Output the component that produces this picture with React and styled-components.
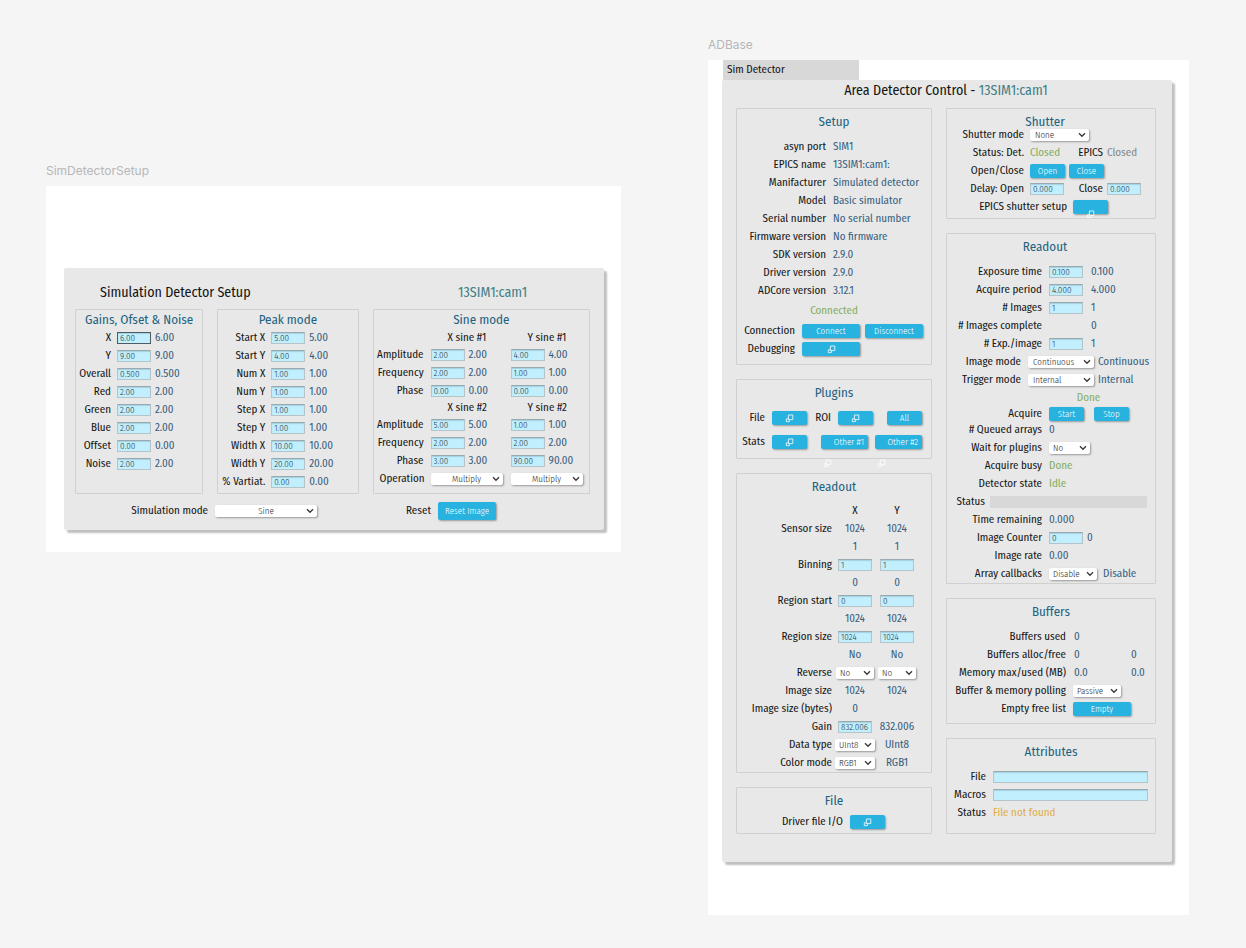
import React, { useId } from 'react';
import styled, { createGlobalStyle } from 'styled-components';

const Global = createGlobalStyle`
  * { box-sizing: border-box; }
  body {
    margin: 0;
    min-height: 100vh;
    background: #f5f5f5;
    color: #141414;
    font: 11px/18px "Fira Sans Condensed", "Roboto Condensed", "Noto Sans", sans-serif;
  }
`;

const c = {
  value: '#37607f',
  heading: '#1e6482',
  device: '#3f7f86',
  ok: '#83ad5e',
  warn: '#e0ae45',
  muted: '#80868a',
  button: '#27b2df',
  field: '#c1effe',
};

/* ---------- canvas ---------- */
const Canvas = styled.main`
  display: grid;
  grid-template-columns: minmax(560px, 575fr) minmax(470px, 481fr);
  column-gap: 87px;
  align-items: start;
  padding: 36px 57px 33px 46px;
`;
const Frame = styled.section`
  padding-top: ${(p) => p.$top || 0}px;
`;
const FrameName = styled.div`
  height: 24px;
  font-family: Inter, Roboto, sans-serif;
  font-size: 12px;
  color: #b7b7b7;
`;
const Sheet = styled.div`
  background: #fff;
  padding: ${(p) => p.$pad};
`;
const Panel = styled.div`
  background: #e8e8e8;
  border-radius: 2px;
  box-shadow: 3px 3px 2px rgba(0, 0, 0, 0.25);
  padding: ${(p) => p.$pad};
`;
const Tab = styled.div`
  width: 136px;
  height: 20px;
  margin-left: 1px;
  padding: 1px 0 0 4px;
  background: #d8d8d8;
`;
const TitleRow = styled.header`
  display: grid;
  grid-template-columns: 358px 1fr;
  padding-left: 25px;
  margin-bottom: 6px;
`;
const Title = styled.h1`
  margin: 0 0 ${(p) => p.$after || 0}px;
  font-size: 14px;
  line-height: 20px;
  font-weight: 400;
  text-align: ${(p) => (p.$center ? 'center' : 'left')};
`;
const Device = styled.span`
  color: ${c.device};
  font-size: 14px;
  line-height: 20px;
`;

/* ---------- groups ---------- */
const Columns = styled.div`
  display: grid;
  grid-template-columns: ${(p) => p.$cols};
  column-gap: 14px;
`;
const Stack = styled.div`
  display: flex;
  flex-direction: column;
  gap: 14px;
`;
const Group = styled.section`
  border: 1px solid #d0d0d0;
  border-radius: 1px;
  padding: ${(p) => (p.$compact ? 2 : 5)}px 0 ${(p) => p.$bottom || 0}px;
`;
const Heading = styled.h2`
  margin: 0 0 ${(p) => p.$after ?? 8}px;
  padding-right: ${(p) => (p.$shift ? 12 : 0)}px;
  font-size: 13px;
  line-height: 16px;
  font-weight: 400;
  color: ${c.heading};
  text-align: center;
`;
const Rows = styled.div`
  display: flex;
  flex-direction: column;
  gap: ${(p) => p.$gap || 0}px;
`;
const Line = styled.div`
  display: flex;
  align-items: center;
  height: ${(p) => p.$h || 18}px;
  padding-left: ${(p) => p.$indent || 0}px;
  padding-right: ${(p) => p.$end || 0}px;
`;
const Cell = styled.span`
  display: flex;
  flex: 0 0 ${(p) => (p.$w ? p.$w + 'px' : 'auto')};
  align-items: center;
  justify-content: ${(p) => (p.$center ? 'center' : 'flex-start')};
  gap: ${(p) => p.$gap || 0}px;
`;
const Label = styled.label`
  flex: 0 0 ${(p) => (p.$w ? p.$w + 'px' : 'auto')};
  margin-right: ${(p) => p.$gap ?? 7}px;
  text-align: right;
  white-space: nowrap;
  display: flex;
  justify-content: flex-end;
`;
const Value = styled.output`
  color: ${(p) => c[p.$tone || 'value']};
  white-space: nowrap;
`;
const Centered = styled.div`
  height: ${(p) => p.$h || 18}px;
  line-height: ${(p) => p.$h || 18}px;
  padding-left: ${(p) => p.$indent || 0}px;
  text-align: center;
`;

/* ---------- controls ---------- */
const Field = styled.input`
  flex: ${(p) => (p.$grow ? '1 1 0' : '0 0 34px')};
  width: 34px;
  min-width: 0;
  height: 12px;
  padding: 0 0 0 2px;
  border: 1px solid ${(p) => (p.$active ? '#4d5c62' : '#b4c4c9')};
  border-top-color: ${(p) => (p.$active ? '#4d5c62' : '#99a9ae')};
  border-radius: 0;
  outline: 0;
  background: ${c.field};
  box-shadow: inset 0 1px 1px rgba(0, 40, 60, 0.15);
  color: #26343a;
  font: 300 9px/10px "Fira Sans Condensed", "Roboto Condensed", sans-serif;
`;
const SelectBox = styled.span`
  position: relative;
  flex: none;
  width: ${(p) => p.$w}px;
  height: 12px;
  border-radius: 2px;
  background: #fff;
  box-shadow: 1px 1px 2px rgba(0, 0, 0, 0.35);

  select {
    display: block;
    appearance: none;
    width: 100%;
    height: 12px;
    padding: 0 ${(p) => (p.$center ? 0 : 10)}px 0 ${(p) => (p.$center ? 0 : p.$w > 55 ? 5 : 4)}px;
    border: 0;
    outline: 0;
    background: transparent;
    color: #262626;
    font: 300 9px/12px "Fira Sans Condensed", "Roboto Condensed", sans-serif;
    text-align-last: ${(p) => (p.$center ? 'center' : 'left')};
  }
  svg {
    position: absolute;
    top: 3px;
    right: 3px;
    pointer-events: none;
  }
`;
const Push = styled.button`
  position: relative;
  flex: none;
  display: flex;
  align-items: center;
  justify-content: ${(p) => (p.$right ? 'flex-end' : 'center')};
  width: ${(p) => p.$w || 35}px;
  height: ${(p) => p.$h || 14}px;
  margin-left: ${(p) => p.$ml || 0}px;
  padding: 0 ${(p) => (p.$right ? 4 : 0)}px 0 0;
  border: 0;
  border-radius: 2px;
  background: ${c.button};
  box-shadow: 1px 1px 2px rgba(0, 0, 0, 0.35);
  color: #fff;
  font: 300 9px/14px "Fira Sans Condensed", "Roboto Condensed", sans-serif;
  white-space: nowrap;
`;
const Dropped = styled.span`
  position: absolute;
  top: ${(p) => p.$top}px;
  left: ${(p) => p.$left}px;
  display: flex;
`;
const Progress = styled.div`
  flex: 1;
  height: 12px;
  background: #d8d8d8;
`;

function Windows() {
  return (
    <svg width="9" height="9" viewBox="0 0 9 9" fill="none" stroke="#fff" strokeWidth="0.8" aria-hidden="true">
      <path d="M3.4 1h4.4v4.6H3.4z" />
      <path d="M3.4 4.8H1.3v2.8h3.1v-2" />
    </svg>
  );
}

function Select({ value, w, center, ...rest }) {
  return (
    <SelectBox $w={w} $center={center}>
      <select defaultValue={value} {...rest}>
        <option>{value}</option>
      </select>
      <svg width="8" height="6" viewBox="0 0 8 6" fill="none" stroke="#3a3a3a" strokeWidth="1.4" aria-hidden="true">
        <path d="M1 1.2l3 3 3-3" />
      </svg>
    </SelectBox>
  );
}

/* label, editable set point and read-back value */
function Param({ label, w, gap, value, readback, between = 4, active }) {
  const id = useId();
  return (
    <Line>
      <Label $w={w} $gap={gap} htmlFor={id}>{label}</Label>
      <Cell $gap={between}>
        <Field id={id} defaultValue={value} $active={active} />
        <Value>{readback ?? value}</Value>
      </Cell>
    </Line>
  );
}

function Info({ label, w, gap, value, tone, pad = 0 }) {
  return (
    <Line>
      <Label as="span" $w={w} $gap={gap}>{label}</Label>
      {pad > 0 && <Cell $w={pad} />}
      <Value $tone={tone}>{value}</Value>
    </Line>
  );
}

function Choice({ label, w, gap, value, width, readback, between = 4 }) {
  const id = useId();
  return (
    <Line>
      <Label $w={w} $gap={gap} htmlFor={id}>{label}</Label>
      <Cell $gap={between}>
        <Select id={id} value={value} w={width} />
        {readback && <Value>{readback}</Value>}
      </Cell>
    </Line>
  );
}

/* ---------- simulation detector setup ---------- */
const gains = [
  ['X', '6.00'], ['Y', '9.00'], ['Overall', '0.500'], ['Red', '2.00'],
  ['Green', '2.00'], ['Blue', '2.00'], ['Offset', '0.00'], ['Noise', '2.00'],
];
const peaks = [
  ['Start X', '5.00'], ['Start Y', '4.00'], ['Num X', '1.00'], ['Num Y', '1.00'], ['Step X', '1.00'],
  ['Step Y', '1.00'], ['Width X', '10.00'], ['Width Y', '20.00'], ['% Vartiat.', '0.00'],
];
const sines = [
  { n: 1, rows: [['Amplitude', '2.00', '4.00'], ['Frequency', '2.00', '1.00'], ['Phase', '0.00', '0.00']] },
  { n: 2, rows: [['Amplitude', '5.00', '1.00'], ['Frequency', '2.00', '2.00'], ['Phase', '3.00', '90.00']] },
];

function SineRow({ label, x, y }) {
  const id = useId();
  return (
    <Line>
      <Label $w={50} htmlFor={id}>{label}</Label>
      <Cell $w={80} $gap={4}>
        <Field id={id} defaultValue={x} />
        <Value>{x}</Value>
      </Cell>
      <Cell $gap={4}>
        <Field aria-label={`${label} Y`} defaultValue={y} />
        <Value>{y}</Value>
      </Cell>
    </Line>
  );
}

const Footer = styled.div`
  display: grid;
  grid-template-columns: 297px 1fr;
  padding-top: 8px;
`;

function SimDetectorSetup() {
  return (
    <Frame $top={126}>
      <FrameName>SimDetectorSetup</FrameName>
      <Sheet $pad="82px 17px 22px 18px">
        <Panel $pad="15px 14px 10px 11px">
          <TitleRow>
            <Title>Simulation Detector Setup</Title>
            <Device>13SIM1:cam1</Device>
          </TitleRow>
          <Columns $cols="128fr 141fr 217fr">
            <Group $compact>
              <Heading $after={1}>Gains, Ofset &amp; Noise</Heading>
              <Rows>
                {gains.map(([l, v], i) => (
                  <Param key={l} label={l} value={v} w={35} gap={6} active={i === 0} />
                ))}
              </Rows>
            </Group>
            <Group $compact $bottom={2}>
              <Heading $after={1}>Peak mode</Heading>
              <Rows>
                {peaks.map(([l, v]) => (
                  <Param key={l} label={l} value={v} w={47} gap={6} />
                ))}
              </Rows>
            </Group>
            <Group $compact>
              <Heading $after={2}>Sine mode</Heading>
              <Rows>
                {sines.map((s) => (
                  <React.Fragment key={s.n}>
                    <Line $h={16} $indent={74}>
                      <Cell $w={80}>X sine #{s.n}</Cell>
                      <Cell>Y sine #{s.n}</Cell>
                    </Line>
                    {s.rows.map(([l, x, y]) => (
                      <SineRow key={l} label={l} x={x} y={y} />
                    ))}
                  </React.Fragment>
                ))}
                <Line>
                  <Label $w={51} $gap={6} htmlFor="op-x">Operation</Label>
                  <Cell $w={80}><Select id="op-x" value="Multiply" w={72} center /></Cell>
                  <Cell><Select aria-label="Operation Y" value="Multiply" w={72} center /></Cell>
                </Line>
              </Rows>
            </Group>
          </Columns>
          <Footer>
            <Line>
              <Label $w={133} htmlFor="sim-mode">Simulation mode</Label>
              <Select id="sim-mode" value="Sine" w={102} center />
            </Line>
            <Line>
              <Label $w={59} htmlFor="reset">Reset</Label>
              <Push id="reset" $w={58} $h={18}>Reset Image</Push>
            </Line>
          </Footer>
        </Panel>
      </Sheet>
    </Frame>
  );
}

/* ---------- area detector base ---------- */
const setup = [
  ['asyn port', 'SIM1'], ['EPICS name', '13SIM1:cam1:'], ['Manifacturer', 'Simulated detector'],
  ['Model', 'Basic simulator'], ['Serial number', 'No serial number'], ['Firmware version', 'No firmware'],
  ['SDK version', '2.9.0'], ['Driver version', '2.9.0'], ['ADCore version', '3.12.1'],
];

/* readout grid row: a label and two centred cells */
function Pair({ label, x, y, plain }) {
  const cell = (v) => (typeof v === 'string' ? (plain ? v : <Value>{v}</Value>) : v);
  return (
    <Line>
      <Label as="span" $w={95} $gap={2}>{label}</Label>
      <Cell $w={42} $center>{cell(x)}</Cell>
      <Cell $w={42} $center>{cell(y)}</Cell>
    </Line>
  );
}
const field = (name, v) => <Field aria-label={name} defaultValue={v} />;

function SetupGroup() {
  return (
    <Group $bottom={6}>
      <Heading>Setup</Heading>
      <Rows>
        {setup.map(([l, v]) => <Info key={l} label={l} value={v} w={89} />)}
      </Rows>
      <Rows>
        <Centered $h={22}><Value $tone="ok">Connected</Value></Centered>
        <Line>
          <Label $w={58} htmlFor="connect">Connection</Label>
          <Cell $gap={5}>
            <Push id="connect" $w={58}>Connect</Push>
            <Push $w={58}>Disconnect</Push>
          </Cell>
        </Line>
        <Line>
          <Label $w={58} htmlFor="debug">Debugging</Label>
          <Push id="debug" $w={58}><Windows /></Push>
        </Line>
      </Rows>
    </Group>
  );
}

function PluginsGroup() {
  return (
    <Group $bottom={7}>
      <Heading>Plugins</Heading>
      <Rows $gap={6}>
        <Line>
          <Label $w={28} htmlFor="p-file">File</Label>
          <Push id="p-file"><Windows /></Push>
          <Label $w={24} htmlFor="p-roi">ROI</Label>
          <Push id="p-roi"><Windows /></Push>
          <Push $ml={14}>All</Push>
        </Line>
        <Line>
          <Label $w={28} htmlFor="p-stats">Stats</Label>
          <Push id="p-stats"><Windows /></Push>
          <Push $w={47} $ml={14} $right>
            Other #1
            <Dropped $top={24} $left={2}><Windows /></Dropped>
          </Push>
          <Push $w={47} $ml={7} $right>
            Other #2
            <Dropped $top={24} $left={2}><Windows /></Dropped>
          </Push>
        </Line>
      </Rows>
    </Group>
  );
}

function SensorGroup() {
  return (
    <Group>
      <Heading $after={7}>Readout</Heading>
      <Rows>
        <Pair x="X" y="Y" plain />
        <Pair label="Sensor size" x="1024" y="1024" />
        <Pair x="1" y="1" />
        <Pair label="Binning" x={field('Binning X', '1')} y={field('Binning Y', '1')} />
        <Pair x="0" y="0" />
        <Pair label="Region start" x={field('Region start X', '0')} y={field('Region start Y', '0')} />
        <Pair x="1024" y="1024" />
        <Pair label="Region size" x={field('Region size X', '1024')} y={field('Region size Y', '1024')} />
        <Pair x="No" y="No" />
        <Pair
          label="Reverse"
          x={<Select aria-label="Reverse X" value="No" w={38} />}
          y={<Select aria-label="Reverse Y" value="No" w={38} />}
        />
        <Pair label="Image size" x="1024" y="1024" />
        <Pair label="Image size (bytes)" x="0" y="" />
        <Pair label="Gain" x={field('Gain', '832.006')} y="832.006" />
        <Pair label="Data type" x={<Select aria-label="Data type" value="UInt8" w={40} />} y="UInt8" />
        <Pair label="Color mode" x={<Select aria-label="Color mode" value="RGB1" w={40} />} y="RGB1" />
      </Rows>
    </Group>
  );
}

function ShutterGroup() {
  return (
    <Group $bottom={2}>
      <Heading $after={-4} $shift>Shutter</Heading>
      <Rows>
        <Choice label="Shutter mode" w={77} gap={6} value="None" width={59} />
        <Line>
          <Label as="span" $w={77} $gap={6}>Status: Det.</Label>
          <Cell $w={45}><Value $tone="ok">Closed</Value></Cell>
          <Label as="span" $w={28} $gap={4}>EPICS</Label>
          <Value $tone="muted">Closed</Value>
        </Line>
        <Line>
          <Label $w={77} $gap={6} htmlFor="open">Open/Close</Label>
          <Cell $gap={4}>
            <Push id="open">Open</Push>
            <Push>Close</Push>
          </Cell>
        </Line>
        <Line>
          <Label $w={77} $gap={6} htmlFor="d-open">Delay: Open</Label>
          <Cell $w={45}><Field id="d-open" defaultValue="0.000" /></Cell>
          <Label $w={28} $gap={4} htmlFor="d-close">Close</Label>
          <Field id="d-close" defaultValue="0.000" />
        </Line>
        <Line>
          <Label $w={120} $gap={6} htmlFor="epics-setup">EPICS shutter setup</Label>
          <Push id="epics-setup">
            <Dropped $top={10} $left={13}><Windows /></Dropped>
          </Push>
        </Line>
      </Rows>
    </Group>
  );
}

function AcquireGroup() {
  return (
    <Group>
      <Heading $shift>Readout</Heading>
      <Rows>
        <Param label="Exposure time" w={95} value="0.100" between={8} />
        <Param label="Acquire period" w={95} value="4.000" between={8} />
        <Param label="# Images" w={95} value="1" between={8} />
        <Info label="# Images complete" w={95} pad={42} value="0" />
        <Param label="# Exp./image" w={95} value="1" between={8} />
        <Choice label="Image mode" w={74} value="Continuous" width={66} readback="Continuous" />
        <Choice label="Trigger mode" w={74} value="Internal" width={66} readback="Internal" />
      </Rows>
      <Centered $indent={75}><Value $tone="ok">Done</Value></Centered>
      <Rows>
        <Line $h={14}>
          <Label $w={95} htmlFor="start">Acquire</Label>
          <Cell $gap={10}>
            <Push id="start">Start</Push>
            <Push>Stop</Push>
          </Cell>
        </Line>
        <Info label="# Queued arrays" w={95} value="0" />
        <Choice label="Wait for plugins" w={95} value="No" width={41} />
        <Info label="Acquire busy" w={95} value="Done" tone="ok" />
        <Info label="Detector state" w={95} value="Idle" tone="ok" />
        <Line $end={8}>
          <Label as="span" $w={38} $gap={5}>Status</Label>
          <Progress role="progressbar" aria-label="Status" aria-valuenow={0} />
        </Line>
        <Info label="Time remaining" w={95} value="0.000" />
        <Param label="Image Counter" w={95} value="0" />
        <Info label="Image rate" w={95} value="0.00" />
        <Choice label="Array callbacks" w={95} value="Disable" width={48} readback="Disable" between={6} />
      </Rows>
    </Group>
  );
}

function BuffersGroup() {
  return (
    <Group $bottom={5}>
      <Heading>Buffers</Heading>
      <Rows>
        <Info label="Buffers used" w={119} gap={8} value="0" />
        <Line>
          <Label as="span" $w={119} $gap={8}>Buffers alloc/free</Label>
          <Cell $w={57}><Value>0</Value></Cell>
          <Value>0</Value>
        </Line>
        <Line>
          <Label as="span" $w={119} $gap={8}>Memory max/used (MB)</Label>
          <Cell $w={57}><Value>0.0</Value></Cell>
          <Value>0.0</Value>
        </Line>
        <Choice label="Buffer & memory polling" w={119} value="Passive" width={48} />
        <Line>
          <Label $w={119} htmlFor="empty">Empty free list</Label>
          <Push id="empty" $w={58}>Empty</Push>
        </Line>
      </Rows>
    </Group>
  );
}

function AttributesGroup() {
  return (
    <Group $bottom={11}>
      <Heading>Attributes</Heading>
      <Rows>
        <Line $end={7}>
          <Label $w={39} htmlFor="a-file">File</Label>
          <Field id="a-file" $grow />
        </Line>
        <Line $end={7}>
          <Label $w={39} htmlFor="a-macros">Macros</Label>
          <Field id="a-macros" $grow />
        </Line>
        <Info label="Status" w={39} value="File not found" tone="warn" />
      </Rows>
    </Group>
  );
}

function ADBase() {
  return (
    <Frame>
      <FrameName>ADBase</FrameName>
      <Sheet $pad="0 17px 53px 14px">
        <Tab>Sim Detector</Tab>
        <Panel $pad="1px 16px 28px 14px">
          <Title $center $after={7}>
            Area Detector Control - <Device>13SIM1:cam1</Device>
          </Title>
          <Columns $cols="196fr 210fr">
            <Stack>
              <SetupGroup />
              <PluginsGroup />
              <SensorGroup />
              <Group $bottom={2}>
                <Heading $after={4}>File</Heading>
                <Line>
                  <Label $w={106} htmlFor="driver-io">Driver file I/O</Label>
                  <Push id="driver-io"><Windows /></Push>
                </Line>
              </Group>
            </Stack>
            <Stack>
              <ShutterGroup />
              <AcquireGroup />
              <BuffersGroup />
              <AttributesGroup />
            </Stack>
          </Columns>
        </Panel>
      </Sheet>
    </Frame>
  );
}

export default function App() {
  return (
    <>
      <Global />
      <Canvas>
        <SimDetectorSetup />
        <ADBase />
      </Canvas>
    </>
  );
}
